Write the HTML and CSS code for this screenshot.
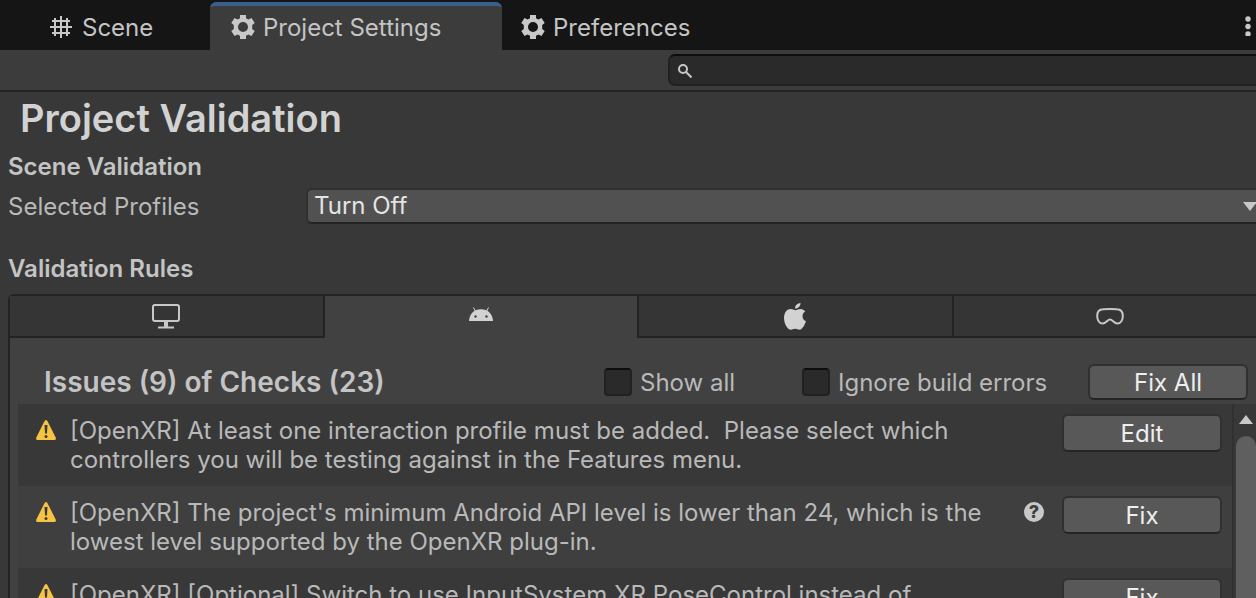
FILE: index.html
```
<!DOCTYPE html>
<html lang="en">
<head>
  <meta charset="UTF-8">
  <meta name="viewport" content="width=device-width, initial-scale=1.0">
  <title>Project Settings</title>
  <link rel="stylesheet" href="styles.css">
</head>
<body>
  <svg class="symbols" aria-hidden="true">
    <symbol id="gear" viewBox="0 0 24 24">
      <path fill-rule="evenodd" d="M9 0h6v3.200l2.500 1.400 3-1.600 3.200 5-2.500 2v4l2.500 2-3.200 5-3-1.600-2.500 1.400V24H9v-3.200l-2.500-1.400-3 1.600L.3 16l2.500-2v-4L.3 8l3.200-5 3 1.600L9 3.200zM12 7a5 5 0 1 0 0 10 5 5 0 0 0 0-10z"/>
    </symbol>
    <symbol id="warning" viewBox="0 0 20 20">
      <path fill="#f7c343" d="M8.600 1Q10-1 11.400 1l8.300 16.500Q20.400 20 18.500 20h-17Q-.4 20 .3 17.500z"/>
      <path fill="#3a3a3a" d="M8.500 5h3l-.5 8.500H9z"/>
      <circle cx="10" cy="16.500" r="1.500" fill="#3a3a3a"/>
    </symbol>
  </svg>

  <nav class="window-tabs">
    <button class="window-tab scene-tab">
      <svg class="grid-icon" viewBox="0 0 22 22"><path d="M5 2v18M11 0v22M17 2v18M2 5h18M0 11h22M2 17h18"/></svg>
      Scene
    </button>
    <button class="window-tab active">
      <svg class="gear-icon"><use href="#gear"/></svg>
      Project Settings
    </button>
    <button class="window-tab">
      <svg class="gear-icon"><use href="#gear"/></svg>
      Preferences
    </button>
    <button class="more-btn" aria-label="More">
      <svg viewBox="0 0 6 20"><circle cx="3" cy="3" r="2.700"/><circle cx="3" cy="10.500" r="2.700"/><circle cx="3" cy="18" r="2.700"/></svg>
    </button>
  </nav>

  <div class="toolbar">
    <label class="search">
      <svg viewBox="0 0 14 14"><circle cx="5" cy="5" r="4"/><path d="M8 8l5.500 5.500"/></svg>
      <input type="text" aria-label="Search">
    </label>
  </div>

  <main class="settings">
    <h1>Project Validation</h1>
    <h2>Scene Validation</h2>
    <div class="field">
      <label for="profiles">Selected Profiles</label>
      <div class="dropdown">
        <select id="profiles">
          <option>Turn Off</option>
        </select>
        <svg viewBox="0 0 14 9"><path d="M0 0h14L7 9z"/></svg>
      </div>
    </div>
    <h2 class="rules-title">Validation Rules</h2>

    <section class="panel">
      <div class="platform-tabs">
        <button class="platform-tab" aria-label="Desktop">
          <svg class="desktop-icon" viewBox="0 0 28 25"><rect x="1" y="1" width="26" height="16" rx="2"/><path d="M6 23.500h16"/><path class="stand" d="M14 17v6"/></svg>
        </button>
        <button class="platform-tab active" aria-label="Android">
          <svg class="android-icon" viewBox="0 0 24 14"><path d="M0 14C.3 7 5 2.300 12 2.300S23.700 7 24 14z"/><path class="antenna" d="M6.500 4.500l-2-4M17.500 4.500l2-4"/><circle class="eye" cx="6.500" cy="9.500" r="1.200"/><circle class="eye" cx="17.500" cy="9.500" r="1.200"/></svg>
        </button>
        <button class="platform-tab" aria-label="iOS">
          <svg class="apple-icon" viewBox="0 0 22 27"><path d="M11.500 7.200C13 7.200 14.300 6 16.500 6c2 0 3.700 1 4.700 2.500-4 2.400-3.300 8.200.8 9.800-1.500 4-3.800 8.500-6.500 8.500-1.700 0-2.400-1-4.300-1s-2.700 1-4.300 1C3.500 26.800 0 20.500 0 15c0-5.600 3.300-8.900 6.700-8.900 2 0 3.400 1.100 4.800 1.100zM11 5.500C10.900 2.700 13.500.2 16.500 0c.3 3-2.500 5.700-5.500 5.500z"/></svg>
        </button>
        <button class="platform-tab" aria-label="Headset">
          <svg class="headset-icon" viewBox="0 0 28 17"><path d="M7 1.300Q14 .7 21 1.300C25 1.500 26.800 4 26.800 8s-2 7.600-5.300 7.600c-3.500 0-5-4-7.500-4s-4 4-7.500 4C3.200 15.600 1.200 12 1.200 8S3 1.500 7 1.300z"/></svg>
        </button>
      </div>

      <div class="panel-header">
        <h3>Issues (9) of Checks (23)</h3>
        <label class="check show-all"><input type="checkbox">Show all</label>
        <label class="check ignore-errors"><input type="checkbox">Ignore build errors</label>
        <button class="btn">Fix All</button>
      </div>

      <div class="issues">
        <ul class="issue-list">
          <li class="issue">
            <svg class="warning-icon"><use href="#warning"/></svg>
            <p>[OpenXR] At least one interaction profile must be added.&nbsp; Please select which controllers you will be testing against in the Features menu.</p>
            <button class="btn">Edit</button>
          </li>
          <li class="issue">
            <svg class="warning-icon"><use href="#warning"/></svg>
            <p>[OpenXR] The project's minimum Android API level is lower than 24, which is the lowest level supported by the OpenXR plug-in.</p>
            <button class="help-btn" aria-label="Help">?</button>
            <button class="btn">Fix</button>
          </li>
          <li class="issue">
            <svg class="warning-icon"><use href="#warning"/></svg>
            <p>[OpenXR] [Optional] Switch to use InputSystem.XR.PoseControl instead of</p>
            <button class="btn">Fix</button>
          </li>
        </ul>
        <div class="scrollbar">
          <svg viewBox="0 0 14 9"><path d="M0 9h14L7 0z"/></svg>
          <div class="thumb"></div>
        </div>
      </div>
    </section>
  </main>
</body>
</html>
```
FILE: styles.css
```
* {
  box-sizing: border-box;
}

body {
  margin: 0;
  height: 100vh;
  overflow: hidden;
  display: flex;
  flex-direction: column;
  font-family: Inter, "Liberation Sans", sans-serif;
  font-size: 24px;
  line-height: 29px;
  background-color: #383838;
  color: #b9b9b9;
}

button, input, select {
  font: inherit;
  color: inherit;
}

button {
  border: none;
  padding: 0;
  background: none;
}

svg {
  display: block;
  flex: none;
  fill: #c8c8c8;
}

h1, h2, h3, p {
  margin: 0;
}

.symbols {
  position: absolute;
  width: 0;
  height: 0;
}

/* window tabs */
.window-tabs {
  flex: none;
  display: flex;
  height: 50px;
  padding-top: 2px;
  background-color: #151515;
}

.window-tab {
  display: flex;
  align-items: center;
  gap: 8px;
  padding: 2px 19px 0;
  color: #c4c4c4;
}

.scene-tab {
  width: 210px;
  gap: 10px;
  padding-left: 50px;
}

.window-tab.active {
  width: 292px;
  padding: 0 20px 2px 21px;
  border-top: 4px solid #3a5f8c;
  border-radius: 6px 6px 0 0;
  background-color: #3c3c3c;
}

.grid-icon {
  width: 22px;
  height: 22px;
  fill: none;
  stroke: #c8c8c8;
  stroke-width: 2;
}

.gear-icon {
  width: 24px;
  height: 24px;
}

.more-btn {
  margin-left: auto;
  padding-right: 5px;
}

.more-btn svg {
  width: 6px;
  height: 20px;
}

/* toolbar */
.toolbar {
  flex: none;
  height: 42px;
  padding-top: 4px;
  border-bottom: 2px solid #232323;
  background-color: #3c3c3c;
}

.search {
  display: flex;
  align-items: center;
  gap: 8px;
  height: 32px;
  margin-left: 668px;
  margin-right: -12px;
  padding: 2px 0 0 8px;
  border: 2px solid #212121;
  border-top-color: #0d0d0d;
  border-radius: 7px;
  background-color: #2a2a2a;
}

.search svg {
  width: 14px;
  height: 14px;
  fill: none;
  stroke: #c8c8c8;
  stroke-width: 2;
}

.search input {
  flex: 1;
  height: 26px;
  border: none;
  outline: none;
  background: none;
}

/* settings */
.settings {
  flex: 1;
  min-height: 0;
  display: flex;
  flex-direction: column;
  padding: 3px 0 0 8px;
}

h1 {
  padding-left: 12px;
  font-size: 38px;
  font-weight: 600;
  line-height: 46px;
  color: #d2d2d2;
}

h2 {
  margin-top: 11px;
  font-size: 24px;
  font-weight: 600;
  line-height: 29px;
  color: #c4c4c4;
}

.field {
  display: flex;
  align-items: center;
  margin-top: 7px;
}

.field label {
  width: 298px;
}

.dropdown {
  flex: 1;
  display: grid;
  align-items: center;
  margin-right: -12px;
}

.dropdown select,
.dropdown svg {
  grid-area: 1 / 1;
}

.dropdown select {
  appearance: none;
  height: 36px;
  padding: 0 6px 2px;
  border: 2px solid #303030;
  border-bottom-color: #242424;
  border-radius: 6px;
  background-color: #515151;
  color: #e4e4e4;
}

.dropdown svg {
  justify-self: end;
  width: 14px;
  height: 9px;
  margin-right: 11px;
  pointer-events: none;
}

.rules-title {
  margin-top: 30px;
}

/* validation panel */
.panel {
  flex: 1;
  min-height: 0;
  display: flex;
  flex-direction: column;
  margin: 11px -12px 0 0;
  border: 2px solid #232323;
  border-bottom: none;
  border-radius: 6px 6px 0 0;
  background-color: #414141;
}

.platform-tabs {
  flex: none;
  display: flex;
  height: 42px;
}

.platform-tab {
  flex: 1;
  display: flex;
  align-items: center;
  justify-content: center;
  border-bottom: 2px solid #232323;
  background-color: #353535;
}

.platform-tab:first-child,
.platform-tab:nth-child(3) {
  border-right: 2px solid #232323;
}

.platform-tab:nth-child(3) {
  border-left: 2px solid #232323;
}

.platform-tab.active {
  border-bottom: none;
  padding-bottom: 6px;
  background-color: #414141;
}

.desktop-icon {
  width: 28px;
  height: 25px;
  fill: none;
  stroke: #c8c8c8;
  stroke-width: 2;
}

.stand {
  stroke-width: 4;
}

.android-icon {
  width: 24px;
  height: 14px;
  fill: #d2d2d2;
}

.antenna {
  stroke: #d2d2d2;
}

.eye {
  fill: #414141;
}

.apple-icon {
  width: 22px;
  height: 27px;
  fill: #d2d2d2;
}

.headset-icon {
  width: 28px;
  height: 17px;
  fill: none;
  stroke: #c8c8c8;
  stroke-width: 2;
}

.panel-header {
  flex: none;
  display: flex;
  align-items: center;
  height: 66px;
  padding: 22px 18px 0 34px;
}

h3 {
  flex: 1;
  font-size: 28px;
  font-weight: 600;
  line-height: 34px;
  color: #c4c4c4;
}

.check {
  display: flex;
  align-items: center;
  gap: 8px;
}

.show-all {
  width: 198px;
}

.ignore-errors {
  width: 286px;
  white-space: nowrap;
}

.check input {
  appearance: none;
  width: 28px;
  height: 28px;
  margin: 0;
  border: 2px solid #212121;
  border-top-color: #0d0d0d;
  border-radius: 4px;
  background-color: #2a2a2a;
}

.check input:checked {
  background-color: #c8c8c8;
}

.btn {
  flex: none;
  width: 160px;
  height: 36px;
  border: 2px solid #303030;
  border-bottom-color: #242424;
  border-radius: 6px;
  background-color: #585858;
  color: #eee;
}

.btn:hover {
  background-color: #676767;
}

/* issues */
.issues {
  flex: 1;
  min-height: 0;
  display: flex;
  margin-left: 8px;
  overflow: hidden;
}

.issue-list {
  flex: 1;
  margin: 0;
  padding: 0;
  list-style: none;
}

.issue {
  display: flex;
  align-items: flex-start;
  min-height: 82px;
  padding: 10px 10px 0 18px;
  background-color: #383838;
}

.issue:nth-child(even) {
  background-color: #3f3f3f;
}

.issue p {
  flex: 1;
  padding: 2px 40px 0 14px;
}

.issue .btn {
  height: 38px;
}

.warning-icon {
  width: 20px;
  height: 20px;
  margin-top: 6px;
}

.help-btn {
  width: 20px;
  height: 20px;
  margin: 6px 18px 0 0;
  border-radius: 50%;
  background-color: #c8c8c8;
  color: #3f3f3f;
  font-size: 18px;
  font-weight: 800;
  line-height: 20px;
}

.scrollbar {
  display: flex;
  flex-direction: column;
  align-items: center;
  gap: 12px;
  width: 34px;
  padding: 11px 8px 0 0;
  border-left: 2px solid #313131;
  background-color: #383838;
}

.scrollbar svg {
  width: 14px;
  height: 9px;
}

.thumb {
  flex: 1;
  width: 20px;
  border-radius: 10px 10px 0 0;
  background-color: #5f5f5f;
}
```
